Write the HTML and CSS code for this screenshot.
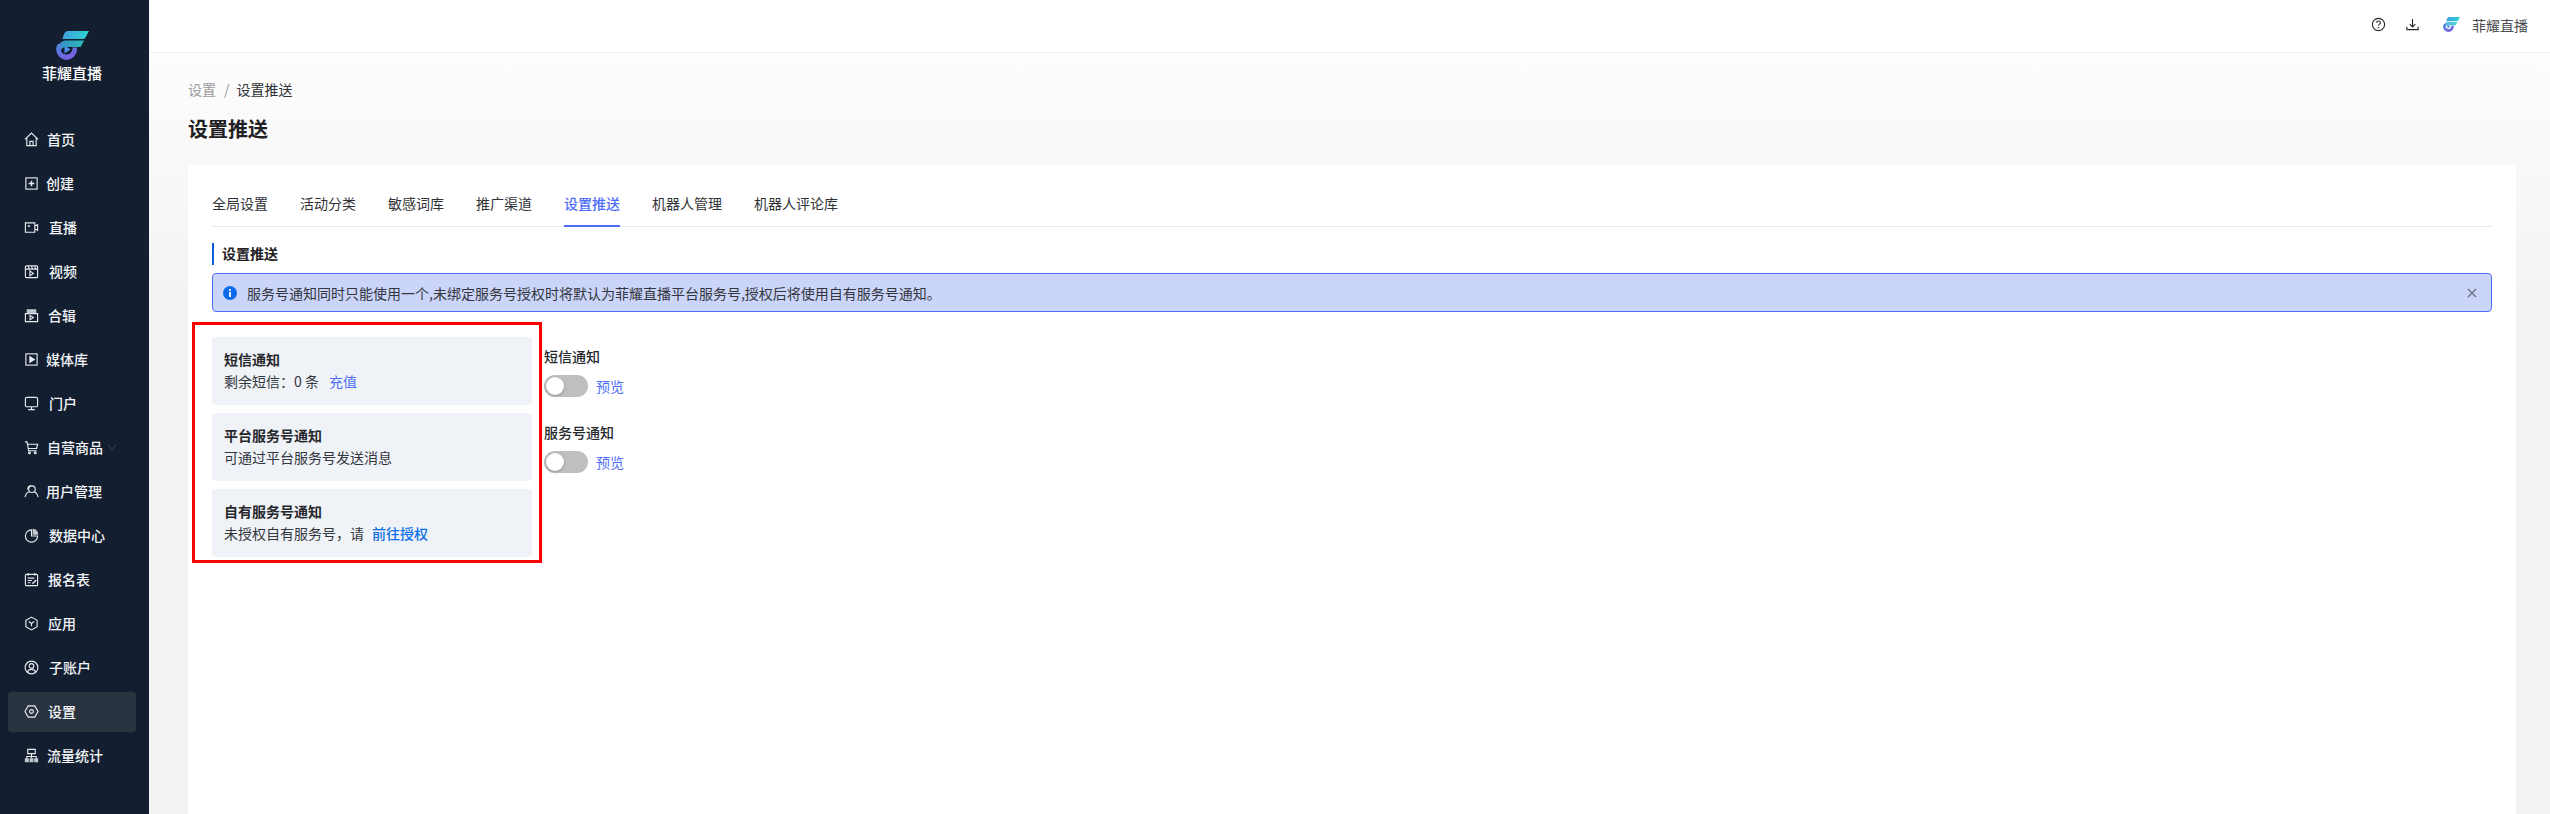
FILE: index.html
```html
<!DOCTYPE html>
<html lang="zh-CN">
<head>
<meta charset="utf-8">
<title>设置推送</title>
<link rel="stylesheet" href="styles.css">
</head>
<body>
<svg class="defs" width="0" height="0" aria-hidden="true">
  <defs>
    <linearGradient id="lgTeal" x1="0" y1="0" x2="1" y2="0"><stop offset="0" stop-color="#3f9fe0"/><stop offset="1" stop-color="#2ed3d0"/></linearGradient>
    <linearGradient id="lgBlue" x1="0" y1="0" x2="0.6" y2="1"><stop offset="0" stop-color="#4a86e0"/><stop offset="1" stop-color="#7a5fe0"/></linearGradient>
    <symbol id="logo" viewBox="0 0 33 29">
      <path d="M11 0H33L29.500 6.500C28.700 7.600 28 8 26.500 8H6.500C7.500 3.500 8.500 1 11 0Z" fill="url(#lgTeal)"/>
      <path d="M9 9.500H28L25.500 14.500C25 15.500 24.300 16 23 16H9.500C6.500 16.500 5.500 17.500 5.200 19H1.200C2 13.500 4.500 10.500 9 9.500Z" fill="url(#lgTeal)" opacity=".85"/>
      <path d="M0.200 18.500A10.400 10.400 0 0 0 21 18.500V16.500H16.500C17 20 14.500 23.500 10.500 23.500C7 23.500 5 21 5 18.500V13H2C0.700 14.500 0.200 16.500 0.200 18.500Z" fill="url(#lgBlue)"/>
      <path d="M8.500 14.500L14.500 18.500L8.500 22.500Z" fill="#4f8fe8"/>
    </symbol>
  </defs>
</svg>

<div class="app">
  <aside class="sidebar">
    <div class="brand">
      <svg class="brand-logo"><use href="#logo"/></svg>
      <div class="brand-name">菲耀直播</div>
    </div>
    <nav class="nav">
      <a class="nav-item"><svg class="nav-icon" viewBox="0 0 16 16"><path d="M1 7.800L8 1.200L15 7.800M3 6.300V14.500H13V6.300M6.300 14.500V10H9.700V14.500"/></svg><span class="nav-label pad-2">首页</span></a>
      <a class="nav-item"><svg class="nav-icon" viewBox="0 0 16 16"><rect x="2" y="2" width="12" height="12"/><path d="M8 5V11M5 8H11" class="thick"/></svg><span class="nav-label pad-1">创建</span></a>
      <a class="nav-item"><svg class="nav-icon" viewBox="0 0 16 16"><path d="M1.500 3H11.500V13H1.500ZM11.500 6.500L14.500 5V11L11.500 9.500"/><path d="M4 6.500H6.500" class="thick"/></svg><span class="nav-label pad-4">直播</span></a>
      <a class="nav-item"><svg class="nav-icon" viewBox="0 0 16 16"><rect x="1.500" y="2" width="13" height="12.500" rx="1"/><path d="M1.500 5.500H14.500M4.500 2.500L5.500 5M8 2.500L9 5M11.500 2.500L12.500 5"/><path d="M6.300 7.500L10 10L6.300 12.500Z"/></svg><span class="nav-label pad-4">视频</span></a>
      <a class="nav-item"><svg class="nav-icon" viewBox="0 0 16 16"><path d="M1.500 6H14.500V14.500H1.500Z"/><path d="M3.500 2H12.500V5H3.500Z" class="solid dim"/><path d="M6.500 8L10 10.200L6.500 12.500Z"/></svg><span class="nav-label pad-3">合辑</span></a>
      <a class="nav-item"><svg class="nav-icon" viewBox="0 0 16 16"><rect x="2" y="2" width="12" height="12"/><path d="M6.300 5L11 8L6.300 11Z" class="solid"/></svg><span class="nav-label pad-1">媒体库</span></a>
      <a class="nav-item"><svg class="nav-icon" viewBox="0 0 16 16"><rect x="1.500" y="1.500" width="13" height="10" rx="1.500"/><path d="M8 11.500V14M4.500 14.500H11.500"/></svg><span class="nav-label pad-4">门户</span></a>
      <a class="nav-item"><svg class="nav-icon" viewBox="0 0 16 16"><path d="M1 2H3.200L5 11.500H13.500M3.800 4.500H14.500L13.500 9H4.600"/><circle cx="5.800" cy="13.500" r="1"/><circle cx="12" cy="13.500" r="1"/></svg><span class="nav-label pad-2">自营商品</span><svg class="nav-caret" viewBox="0 0 10 6"><path d="M1 1L5 5L9 1"/></svg></a>
      <a class="nav-item"><svg class="nav-icon" viewBox="0 0 16 16"><circle cx="8.500" cy="5.500" r="3.500"/><path d="M1 14C2 10.500 3.500 8.500 6 8M15 14C14.300 11 13 9 11 8.300M4 6C4 3.500 5.500 2 7.500 2"/></svg><span class="nav-label pad-1">用户管理</span></a>
      <a class="nav-item"><svg class="nav-icon" viewBox="0 0 16 16"><path d="M8 2A6.500 6.500 0 1 0 14.500 8.500H8Z"/><path d="M9.800 1.500A5 5 0 0 1 14.500 6.500H9.800Z" class="solid dim"/></svg><span class="nav-label pad-4">数据中心</span></a>
      <a class="nav-item"><svg class="nav-icon" viewBox="0 0 16 16"><rect x="1.500" y="2.500" width="13" height="12" rx="1"/><path d="M4.500 1V4M11.500 1V4M4 6.500H11M4 9H8.500M4 11.500H7"/><path d="M9 12.500L13 8.500" class="thick"/></svg><span class="nav-label pad-3">报名表</span></a>
      <a class="nav-item"><svg class="nav-icon" viewBox="0 0 16 16"><path d="M8 1.200L14 4.600V11.400L8 14.800L2 11.400V4.600Z"/><path d="M5.200 5.800L8 8L10.800 5.800M8 8V11"/></svg><span class="nav-label pad-3">应用</span></a>
      <a class="nav-item"><svg class="nav-icon" viewBox="0 0 16 16"><circle cx="8" cy="8" r="6.800"/><circle cx="8" cy="6.300" r="2.500"/><path d="M3.500 13C4.500 10.800 6 10 8 10C10 10 11.500 10.800 12.500 13"/></svg><span class="nav-label pad-4">子账户</span></a>
      <a class="nav-item is-active"><svg class="nav-icon" viewBox="0 0 16 16"><path d="M1 8L4.500 2H11.500L15 8L11.500 14H4.500Z"/><circle cx="8" cy="8" r="2"/></svg><span class="nav-label pad-3">设置</span></a>
      <a class="nav-item"><svg class="nav-icon" viewBox="0 0 16 16"><path d="M4 1.500H12V6H4Z"/><path d="M8 6V9M3 11V9H13V11M8 9V11" /><path d="M1.500 11.500H4.500V14.500H1.500ZM6.500 11.500H9.500V14.500H6.500ZM11.500 11.500H14.500V14.500H11.500Z" class="solid dim"/></svg><span class="nav-label pad-2">流量统计</span></a>
    </nav>
  </aside>

  <div class="main">
    <header class="topbar">
      <svg class="top-icon" viewBox="0 0 16 16"><circle cx="8" cy="8" r="6.500"/><path d="M6 6.200C6 5 6.900 4.300 8 4.300C9.200 4.300 10 5.100 10 6.100C10 7.600 8 7.600 8 9.300"/><path d="M8 10.800V12" class="thick"/></svg>
      <svg class="top-icon" viewBox="0 0 16 16"><path d="M8 2V10M5 7.500L8 10.500L11 7.500M2 10.500V13.500H14V10.500"/></svg>
      <svg class="top-logo"><use href="#logo"/></svg>
      <span class="top-name">菲耀直播</span>
    </header>

    <div class="page">
      <div class="crumbs"><span class="crumb-muted">设置</span><span class="crumb-sep">/</span><span>设置推送</span></div>
      <h1 class="page-title">设置推送</h1>

      <section class="card">
        <div class="tabs">
          <a class="tab">全局设置</a>
          <a class="tab">活动分类</a>
          <a class="tab">敏感词库</a>
          <a class="tab">推广渠道</a>
          <a class="tab is-active">设置推送</a>
          <a class="tab">机器人管理</a>
          <a class="tab">机器人评论库</a>
        </div>
        <h2 class="section-title">设置推送</h2>
        <div class="alert">
          <svg class="alert-icon" viewBox="0 0 14 14"><circle cx="7" cy="7" r="7" fill="#0b6bea"/><rect x="6.100" y="3" width="1.800" height="1.800" fill="#fff"/><rect x="6.100" y="5.800" width="1.800" height="5.200" fill="#fff"/></svg>
          <span class="alert-text">服务号通知同时只能使用一个,未绑定服务号授权时将默认为菲耀直播平台服务号,授权后将使用自有服务号通知。</span>
          <svg class="alert-close" viewBox="0 0 10 10"><path d="M1 1L9 9M9 1L1 9"/></svg>
        </div>

        <div class="notify">
          <div class="notify-list">
            <div class="notify-box">
              <div class="notify-title">短信通知</div>
              <div class="notify-sub">剩余短信：0 条<a class="link">充值</a></div>
            </div>
            <div class="notify-box">
              <div class="notify-title">平台服务号通知</div>
              <div class="notify-sub">可通过平台服务号发送消息</div>
            </div>
            <div class="notify-box">
              <div class="notify-title">自有服务号通知</div>
              <div class="notify-sub">未授权自有服务号，请<a class="link link-strong">前往授权</a></div>
            </div>
            <div class="highlight"></div>
          </div>
          <div class="settings">
            <div class="setting">
              <div class="setting-label">短信通知</div>
              <div class="setting-row"><span class="switch"><span class="knob"></span></span><a class="preview">预览</a></div>
            </div>
            <div class="setting">
              <div class="setting-label">服务号通知</div>
              <div class="setting-row"><span class="switch"><span class="knob"></span></span><a class="preview">预览</a></div>
            </div>
          </div>
        </div>
      </section>
    </div>
  </div>
</div>
</body>
</html>
```
FILE: styles.css
```css
* { box-sizing: border-box; }
html, body { margin: 0; height: 100%; }
body {
  font-family: "Noto Sans CJK SC", "Noto Sans", sans-serif;
  font-size: 14px;
  line-height: 22px;
  color: #303236;
  overflow: hidden;
}
.defs { position: absolute; }
.app { display: flex; height: 814px; }

/* sidebar */
.sidebar { width: 149px; flex: none; background: #131f30; padding: 0 13px 0 8px; color: #f2f4f7; }
.brand { height: 120px; padding-top: 31px; display: flex; flex-direction: column; align-items: center; }
.brand-logo { width: 33px; height: 29px; }
.brand-name { font-size: 15px; font-weight: 500; line-height: 22px; margin-top: 2px; color: #fff; }
.nav { display: flex; flex-direction: column; gap: 4px; }
.nav-item { height: 40px; display: flex; align-items: center; padding: 0 0 2px 16px; border-radius: 4px; position: relative; font-size: 14px; font-weight: 500; }
.nav-item.is-active { background: #2a3441; }
.nav-icon { width: 15px; height: 15px; flex: none; fill: none; stroke: #e8ebef; stroke-width: 1.200; }
.nav-icon .thick { stroke-width: 1.600; }
.nav-icon .solid { fill: #e8ebef; }
.nav-icon .dim { fill: #c3c8cf; stroke: #c3c8cf; }
.nav-label.pad-1 { margin-left: 7px; }
.nav-label.pad-2 { margin-left: 8px; }
.nav-label.pad-3 { margin-left: 9px; }
.nav-label.pad-4 { margin-left: 10px; }
.nav-caret { width: 10px; height: 6px; margin-left: 4px; fill: none; stroke: #2c3a4c; stroke-width: 1.200; }

/* main */
.main { flex: 1; min-width: 0; display: flex; flex-direction: column; background: linear-gradient(#fff 0, #f3f3f3 300px); }
.topbar { height: 53px; flex: none; background: #fff; border-bottom: 1px solid #f0f0f0; display: flex; align-items: center; justify-content: flex-end; padding: 0 22px 3px 0; }
.top-icon { width: 15px; height: 15px; fill: none; stroke: #26282c; stroke-width: 1.200; margin-right: 19px; }
.top-icon .thick { stroke-width: 1.500; }
.top-logo { width: 17px; height: 15px; margin-left: 4px; }
.top-name { margin-left: 12px; color: #4a4c50; }

.page { flex: 1; padding: 25px 34px 0 39px; display: flex; flex-direction: column; min-height: 0; }
.crumbs { display: flex; height: 22px; align-items: center; }
.crumb-muted { color: #9a9a9a; }
.crumb-sep { color: #9a9a9a; margin: 0 7px 0 8px; }
.page-title { margin: 14px 0 0; font-size: 20px; line-height: 30px; font-weight: 600; color: #1f2023; }

.card { flex: 1; margin-top: 21px; background: #fff; border-radius: 4px 4px 0 0; padding: 24px; min-height: 0; }

.tabs { display: flex; gap: 32px; height: 38px; border-bottom: 1px solid #e9ebee; }
.tab { height: 38px; line-height: 29px; color: #303236; }
.tab.is-active { color: #4f6ef7; font-weight: 500; border-bottom: 2px solid #4f6ef7; }

.section-title { margin: 16px 0 0; border-left: 2px solid #0b5fe0; padding-left: 8px; height: 22px; font-size: 14px; line-height: 20px; font-weight: 600; color: #1f2023; }

.alert { margin-top: 8px; height: 39px; display: flex; align-items: center; background: #cbd5fa; border: 1px solid #4f6ef7; border-radius: 4px; padding: 0 14px 0 10px; }
.alert-icon { width: 14px; height: 14px; flex: none; }
.alert-text { flex: 1; margin-left: 10px; color: #33363c; }
.alert-close { width: 10px; height: 10px; fill: none; stroke: #6b6f78; stroke-width: 1.300; }

.notify { display: flex; margin-top: 25px; }
.notify-list { position: relative; width: 320px; display: flex; flex-direction: column; gap: 8px; }
.notify-box { height: 68px; background: #eff2f7; border-radius: 4px; padding: 11px 12px; }
.notify-title { font-weight: 600; font-size: 14px; line-height: 22px; color: #26282c; }
.notify-sub { line-height: 22px; color: #33363c; }
.link { margin-left: 10px; color: #4f6ef7; }
.link-strong { margin-left: 8px; color: #0b6fe8; font-weight: 500; }
.highlight { position: absolute; left: -20px; top: -15px; width: 350px; height: 241px; border: 3px solid #f00; pointer-events: none; }

.settings { margin-left: 12px; display: flex; flex-direction: column; gap: 10px; }
.setting { height: 66px; padding-top: 8px; }
.setting-label { font-weight: 500; line-height: 22px; color: #26282c; }
.setting-row { display: flex; align-items: center; height: 22px; margin-top: 8px; }
.switch { width: 44px; height: 22px; border-radius: 11px; background: #bfbfbf; padding: 2px; display: block; }
.knob { display: block; width: 18px; height: 18px; border-radius: 50%; background: #fff; box-shadow: 0 1px 3px rgba(0,0,0,.25); }
.preview { margin-left: 8px; color: #4f6ef7; }
```
